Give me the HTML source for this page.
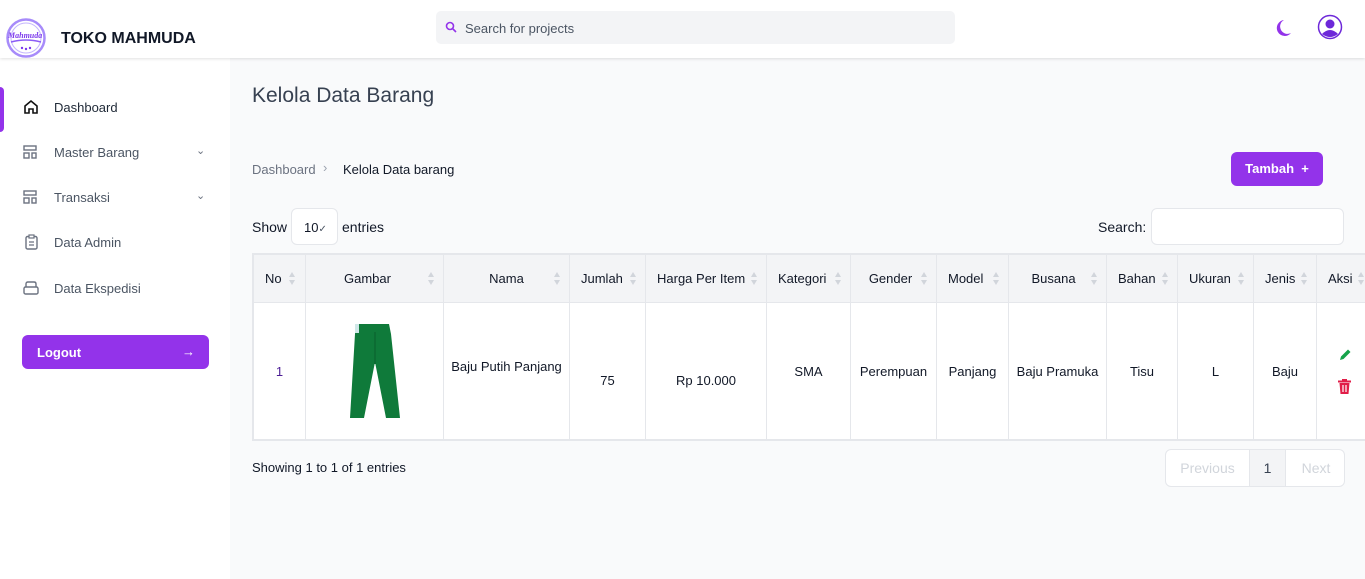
<!DOCTYPE html>
<html><head><meta charset="utf-8"><style>
*{box-sizing:border-box;margin:0;padding:0}
body{width:1365px;height:579px;overflow:hidden;background:#f9fafb;font-family:"Liberation Sans",sans-serif;position:relative;color:#111827}
.abs{position:absolute}
.side{left:0;top:0;width:230px;height:579px;background:#fff}
.top{left:0;top:0;width:1365px;height:58px;background:#fff;box-shadow:0 1px 3px rgba(0,0,0,.12)}
.nav{position:absolute;left:54px;font-size:13px;color:#4b5563}
.ic{position:absolute;left:23px}
.th,.td{position:absolute;display:flex;align-items:center;justify-content:center;font-size:13px;border-right:1px solid #e5e7eb}
.th{top:255px;height:47px;background:#f3f4f6;font-weight:normal;color:#111827}
.td{top:303px;height:136px;background:#fff;color:#111827}
.sort{position:absolute;right:8px;top:17px;width:7px;height:13px}
.sort:before,.sort:after{content:"";position:absolute;left:0;border-left:3.5px solid transparent;border-right:3.5px solid transparent}
.sort:before{top:0;border-bottom:5px solid #d1d5db}
.sort:after{bottom:0;border-top:5px solid #d1d5db}
</style></head><body>
<div class="abs side"></div>
<div class="abs top"></div>
<!-- logo -->
<svg class="abs" style="left:6px;top:18px" width="40" height="40" viewBox="0 0 40 40"><circle cx="20" cy="20" r="18.5" fill="#fff" stroke="#a78bfa" stroke-width="2.5"/><circle cx="20" cy="20" r="15" fill="none" stroke="#c4b5fd" stroke-width="1"/><path d="M5 24Q20 20 35 24" stroke="#8b5cf6" stroke-width="1.5" fill="none"/><circle cx="16" cy="30" r="1.2" fill="#7c3aed"/><circle cx="20" cy="31" r="1.2" fill="#7c3aed"/><circle cx="24" cy="30" r="1.2" fill="#7c3aed"/></svg>
<div class="abs" style="left:8px;top:31px;font-size:8px;font-style:italic;font-weight:bold;color:#7c3aed;font-family:'Liberation Serif',serif">Mahmuda</div>
<div class="abs" style="left:61px;top:30px;font-size:16px;font-weight:bold;color:#111827">TOKO MAHMUDA</div>
<!-- search -->
<div class="abs" style="left:436px;top:11px;width:519px;height:33px;background:#f3f4f6;border-radius:5px"></div>
<svg class="abs" style="left:445px;top:21px" width="12" height="12" viewBox="0 0 12 12"><circle cx="5" cy="5" r="3.5" fill="none" stroke="#9333ea" stroke-width="1.6"/><path d="M7.5 7.5L11 11" stroke="#9333ea" stroke-width="1.6"/></svg>
<div class="abs" style="left:465px;top:21px;font-size:13px;color:#4b5563">Search for projects</div>
<svg class="abs" style="left:1276px;top:19px" width="16" height="18" viewBox="0 0 16 18"><path d="M8 1A8 8 0 1 0 15 14A6.5 6.5 0 0 1 8 1Z" fill="#9333ea"/></svg>
<svg class="abs" style="left:1317px;top:14px" width="26" height="26" viewBox="0 0 26 26"><circle cx="13" cy="13" r="11.5" fill="#fff" stroke="#6d28d9" stroke-width="1.5"/><circle cx="13" cy="10" r="4.5" fill="#6d28d9"/><path d="M5 20Q13 12 21 20Q13 26 5 20Z" fill="#6d28d9"/></svg>
<!-- nav -->
<div class="abs" style="left:0;top:87px;width:4px;height:45px;background:#9333ea;border-radius:0 4px 4px 0"></div>
<svg class="ic" style="top:99px" width="16" height="16" viewBox="0 0 16 16"><path d="M2 7L8 2L14 7V14H10V10H6V14H2Z" fill="none" stroke="#111" stroke-width="1.6"/></svg>
<div class="nav" style="top:100px;color:#1f2937">Dashboard</div>
<svg class="ic" style="top:145px" width="14" height="14" viewBox="0 0 14 14"><rect x="1" y="1" width="12" height="4" fill="none" stroke="#6b7280" stroke-width="1.4"/><rect x="1" y="8" width="5" height="5" fill="none" stroke="#6b7280" stroke-width="1.4"/><rect x="9" y="8" width="4" height="5" fill="none" stroke="#6b7280" stroke-width="1.4"/></svg>
<div class="nav" style="top:145px">Master Barang</div>
<div class="abs" style="left:196px;top:144px;font-size:11px;color:#6b7280">&#8964;</div>
<svg class="ic" style="top:190px" width="14" height="14" viewBox="0 0 14 14"><rect x="1" y="1" width="12" height="4" fill="none" stroke="#6b7280" stroke-width="1.4"/><rect x="1" y="8" width="5" height="5" fill="none" stroke="#6b7280" stroke-width="1.4"/><rect x="9" y="8" width="4" height="5" fill="none" stroke="#6b7280" stroke-width="1.4"/></svg>
<div class="nav" style="top:190px">Transaksi</div>
<div class="abs" style="left:196px;top:189px;font-size:11px;color:#6b7280">&#8964;</div>
<svg class="ic" style="left:25px;top:234px" width="13" height="16" viewBox="0 0 13 16"><rect x="1" y="2.5" width="11" height="12.5" rx="1.5" fill="none" stroke="#6b7280" stroke-width="1.4"/><rect x="4" y="1" width="5" height="3" fill="#fff" stroke="#6b7280" stroke-width="1.2"/><path d="M4 8H9M4 11H9" stroke="#6b7280" stroke-width="1.2"/></svg>
<div class="nav" style="top:235px">Data Admin</div>
<svg class="ic" style="top:281px" width="16" height="14" viewBox="0 0 16 14"><rect x="1" y="6" width="14" height="7" rx="1.5" fill="none" stroke="#6b7280" stroke-width="1.4"/><path d="M3 6V3Q3 1 5 1H11Q13 1 13 3V6" fill="none" stroke="#6b7280" stroke-width="1.4"/></svg>
<div class="nav" style="top:281px">Data Ekspedisi</div>
<div class="abs" style="left:22px;top:335px;width:187px;height:34px;background:#9333ea;border-radius:6px;color:#fff;font-size:13px;font-weight:bold;padding:10px 15px">Logout<span style="position:absolute;right:14px;top:9px;font-weight:normal">&#8594;</span></div>
<!-- main -->
<div class="abs" style="left:252px;top:84px;font-size:21px;color:#374151">Kelola Data Barang</div>
<div class="abs" style="left:252px;top:162px;font-size:13px;color:#6b7280">Dashboard</div>
<div class="abs" style="left:323px;top:160px;font-size:13px;color:#9ca3af">&#8250;</div>
<div class="abs" style="left:343px;top:162px;font-size:13px;color:#111827">Kelola Data barang</div>
<div class="abs" style="left:1231px;top:152px;width:92px;height:34px;background:#9333ea;border-radius:6px;color:#fff;font-size:13px;font-weight:bold;text-align:center;line-height:34px">Tambah &nbsp;+</div>
<div class="abs" style="left:252px;top:219px;font-size:14px">Show</div>
<div class="abs" style="left:291px;top:208px;width:47px;height:37px;background:#fff;border:1px solid #e5e7eb;border-radius:6px;font-size:13px;padding:11px 0 0 12px">10<span style="font-size:10px;color:#4b5563">&#10003;</span></div>
<div class="abs" style="left:342px;top:219px;font-size:14px">entries</div>
<div class="abs" style="left:1098px;top:219px;font-size:14px">Search:</div>
<div class="abs" style="left:1151px;top:208px;width:193px;height:37px;background:#fff;border:1px solid #e5e7eb;border-radius:6px"></div>
<div class="abs" style="left:252px;top:253px;width:1113px;height:188px;border:2px solid #e5e7eb;border-right:none;background:#fff"></div>
<div class="abs" style="left:254px;top:302px;width:1111px;height:1px;background:#e5e7eb"></div>
<div class="th" style="left:254px;width:52px;justify-content:flex-start;padding-left:11px">No<span class="sort" style="right:9px"></span></div>
<div class="th" style="left:306px;width:138px;padding-right:14px">Gambar<span class="sort"></span></div>
<div class="th" style="left:444px;width:126px">Nama<span class="sort"></span></div>
<div class="th" style="left:570px;width:76px;justify-content:flex-start;padding-left:11px">Jumlah<span class="sort"></span></div>
<div class="th" style="left:646px;width:121px;justify-content:flex-start;padding-left:11px">Harga Per Item<span class="sort"></span></div>
<div class="th" style="left:767px;width:84px;justify-content:flex-start;padding-left:11px">Kategori<span class="sort"></span></div>
<div class="th" style="left:851px;width:86px;padding-right:6px">Gender<span class="sort"></span></div>
<div class="th" style="left:937px;width:72px;justify-content:flex-start;padding-left:11px">Model<span class="sort"></span></div>
<div class="th" style="left:1009px;width:98px;padding-right:8px">Busana<span class="sort"></span></div>
<div class="th" style="left:1107px;width:71px;justify-content:flex-start;padding-left:11px">Bahan<span class="sort"></span></div>
<div class="th" style="left:1178px;width:76px;justify-content:flex-start;padding-left:11px">Ukuran<span class="sort"></span></div>
<div class="th" style="left:1254px;width:63px;justify-content:flex-start;padding-left:11px">Jenis<span class="sort"></span></div>
<div class="th" style="left:1317px;width:48px;justify-content:flex-start;padding-left:11px;border-right:none">Aksi<span class="sort" style="right:0"></span></div>
<div class="td" style="left:254px;width:52px;color:#4c1d95">1</div>
<div class="td" style="left:306px;width:138px"><svg width="66" height="98" viewBox="0 0 66 98"><path d="M14 2H47L49 12L58 96H44L33 40L22 96H8L13 12Z" fill="#0f7a3a"/><path d="M33 10V42" stroke="#0a5e2c" stroke-width="1"/><rect x="13" y="2" width="4" height="9" fill="#cfe8e8"/></svg></div>
<div class="td" style="left:444px;width:126px;padding-bottom:10px">Baju Putih Panjang</div>
<div class="td" style="left:570px;width:76px;padding-top:18px">75</div>
<div class="td" style="left:646px;width:121px;padding-top:18px">Rp 10.000</div>
<div class="td" style="left:767px;width:84px">SMA</div>
<div class="td" style="left:851px;width:86px">Perempuan</div>
<div class="td" style="left:937px;width:72px">Panjang</div>
<div class="td" style="left:1009px;width:98px">Baju Pramuka</div>
<div class="td" style="left:1107px;width:71px">Tisu</div>
<div class="td" style="left:1178px;width:76px">L</div>
<div class="td" style="left:1254px;width:63px">Baju</div>
<div class="td" style="left:1317px;width:48px;border-right:none"></div>
<svg class="abs" style="left:1339px;top:348px" width="13" height="13" viewBox="0 0 13 13"><path d="M1 12L2 8.5L9 1.5L11.5 4L4.5 11Z" fill="#16a34a"/></svg>
<svg class="abs" style="left:1338px;top:379px" width="13" height="15" viewBox="0 0 13 15"><rect x="0" y="1.5" width="13" height="2" fill="#e11d48"/><rect x="4" y="0" width="5" height="2" fill="#e11d48"/><path d="M1.5 4H11.5L10.5 15H2.5Z" fill="#e11d48"/><path d="M5 6V13M8 6V13" stroke="#fff" stroke-width="1.2"/></svg>
<div class="abs" style="left:252px;top:460px;font-size:13px">Showing 1 to 1 of 1 entries</div>
<div class="abs" style="left:1165px;top:449px;width:180px;height:38px;border:1px solid #e5e7eb;border-radius:6px;background:#fff;overflow:hidden;font-size:14px">
<div class="abs" style="left:0;top:0;width:84px;height:36px;line-height:36px;text-align:center;color:#d1d5db;border-right:1px solid #e5e7eb">Previous</div>
<div class="abs" style="left:84px;top:0;width:36px;height:36px;line-height:36px;text-align:center;background:#f3f4f6;color:#374151;border-right:1px solid #e5e7eb">1</div>
<div class="abs" style="left:120px;top:0;width:60px;height:36px;line-height:36px;text-align:center;color:#d1d5db">Next</div>
</div>
</body></html>
